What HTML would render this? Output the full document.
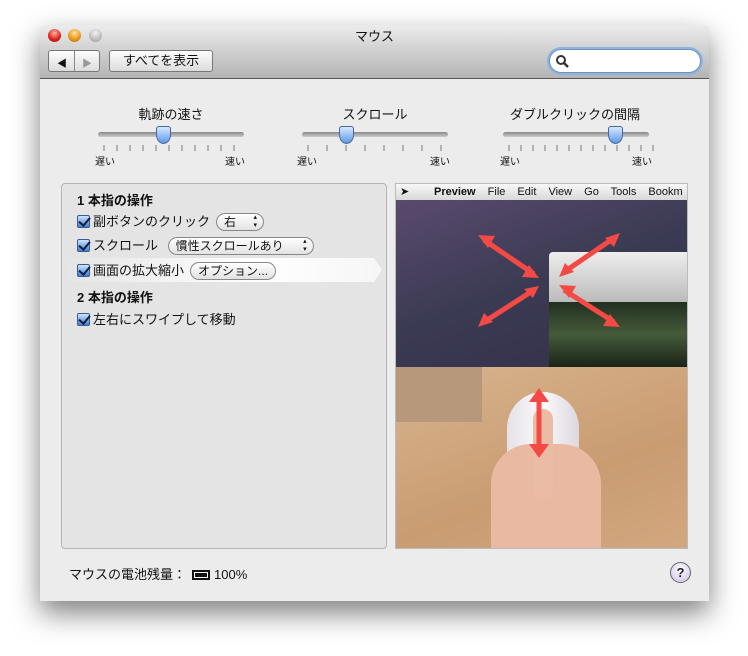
<!DOCTYPE html>
<html><head><meta charset="utf-8"><style>
*{box-sizing:border-box;margin:0;padding:0}
body{width:748px;height:656px;background:#fff;position:relative;overflow:hidden;font-family:"Liberation Sans","Noto Sans CJK JP",sans-serif;font-size:13px;color:#111}
.win{position:absolute;left:40px;top:25px;width:669px;height:576px;background:#ececec;box-shadow:0 12px 28px rgba(0,0,0,.5);border-radius:5px 5px 0 0;overflow:hidden}
.tb{position:absolute;left:0;top:0;width:100%;height:54px;background:linear-gradient(#ececec,#cfcfcf 50%,#b4b4b4);border-bottom:1px solid #555}
.a{position:absolute}
.light{position:absolute;top:4px;width:13px;height:13px;border-radius:50%}
.btn{position:absolute;background:linear-gradient(#fdfdfd,#dcdcdc);border:1px solid #777;border-radius:3px;height:22px;top:25px}
.title{position:absolute;top:1px;left:0;width:100%;text-align:center;font-size:13px}
.lbl{position:absolute;font-size:13px;text-align:center;width:160px}
.track{position:absolute;height:5px;border-radius:3px;background:linear-gradient(#888,#ccc);width:146px}
.knob{position:absolute;width:15px;height:18px;background:linear-gradient(#d8e8ff,#5d9ae8);border:1px solid #46679a;border-radius:3px 3px 8px 8px / 3px 3px 10px 10px}
.small{position:absolute;font-size:10px}
.panel{position:absolute;left:21px;top:158px;width:326px;height:366px;background:#e4e4e4;border:1px solid #b5b5b5;border-radius:4px}
.row{position:absolute;left:15px;font-size:13px;white-space:nowrap}
.cb{display:inline-block;width:13px;height:13px;background:linear-gradient(#d0e4fa,#3d7fd8);border:1px solid #3a5d91;border-radius:2px;vertical-align:-2px;margin-right:3px;position:relative}
.cb:after{content:"";position:absolute;left:3px;top:-1px;width:5px;height:9px;border:solid #102040;border-width:0 2px 2px 0;transform:rotate(40deg)}
.pop{display:inline-block;border:1px solid #888;border-radius:9px;background:linear-gradient(#fff,#e2e2e2);padding:0 7px;height:18px;line-height:16px;font-size:12px;margin-left:6px;position:relative;vertical-align:0}
.img{position:absolute;left:355px;top:158px;width:293px;height:366px;overflow:hidden;border:1px solid #bbb}
.arr{stroke:#f34a45;stroke-width:5;fill:none}
</style></head><body>
<div class="win">
 <div class="tb">
  <div class="light" style="left:8px;background:radial-gradient(circle at 50% 30%,#ffb3a8,#d8201a 60%,#a11)"></div>
  <div class="light" style="left:28px;background:radial-gradient(circle at 50% 30%,#ffe3a0,#e69618 60%,#b66a00)"></div>
  <div class="light" style="left:49px;background:radial-gradient(circle at 50% 30%,#f2f2f2,#bbb 60%,#999)"></div>
  <div class="title">マウス</div>
  <div class="btn" style="left:8px;width:52px"><span class="a" style="left:8px;top:4px;font-size:10px">◀</span><span class="a" style="left:25px;top:0;width:1px;height:20px;background:#888"></span><span class="a" style="left:33px;top:4px;font-size:10px;color:#999">▶</span></div>
  <div class="btn" style="left:69px;width:104px;text-align:center;line-height:20px;font-size:13px">すべてを表示</div>
  <div class="a" style="left:509px;top:24px;width:152px;height:24px;border-radius:12px;background:#fff;border:1px solid #7a8fb0;box-shadow:0 0 0 2px #8ab4e6"><svg class="a" style="left:5px;top:4px" width="14" height="14"><circle cx="6" cy="6" r="4" stroke="#333" stroke-width="2" fill="none"/><path d="M9 9l4 4" stroke="#333" stroke-width="2.5"/></svg></div>
 </div>
 <div class="lbl" style="left:51px;top:79px">軌跡の速さ</div>
 <div class="lbl" style="left:255px;top:79px">スクロール</div>
 <div class="lbl" style="left:455px;top:79px">ダブルクリックの間隔</div>
 <div class="track" style="left:58px;top:107px"></div><div class="knob" style="left:116px;top:101px"></div>
 <div class="track" style="left:262px;top:107px"></div><div class="knob" style="left:299px;top:101px"></div>
 <div class="track" style="left:463px;top:107px"></div><div class="knob" style="left:568px;top:101px"></div>
 <svg class="a" style="left:0;top:118px" width="669" height="10" stroke="#777">
  <path d="M64 2v6M77 2v6M90 2v6M103 2v6M116 2v6M129 2v6M142 2v6M155 2v6M168 2v6M181 2v6M194 2v6"/>
  <path d="M268 2v6M287 2v6M306 2v6M325 2v6M344 2v6M363 2v6M382 2v6M401 2v6"/>
  <path d="M469 2v6M481 2v6M493 2v6M505 2v6M517 2v6M529 2v6M541 2v6M553 2v6M565 2v6M577 2v6M589 2v6M601 2v6M613 2v6"/>
 </svg>
 <div class="small" style="left:55px;top:128px">遅い</div><div class="small" style="left:185px;top:128px">速い</div>
 <div class="small" style="left:257px;top:128px">遅い</div><div class="small" style="left:390px;top:128px">速い</div>
 <div class="small" style="left:460px;top:128px">遅い</div><div class="small" style="left:592px;top:128px">速い</div>
 <div class="panel">
  <svg class="a" style="left:0;top:74px" width="326" height="24"><defs><linearGradient id="g" x1="0" x2="1"><stop offset="0" stop-color="#e4e4e4"/><stop offset=".6" stop-color="#fff"/><stop offset="1" stop-color="#f6f6f6"/></linearGradient></defs><path d="M0 0H312L320 12L312 24H0Z" fill="url(#g)"/></svg>
  <div class="row" style="top:6px;font-weight:bold">1 本指の操作</div>
  <div class="row" style="top:27px"><span class="cb"></span>副ボタンのクリック<span class="pop" style="width:48px">右<span class="a" style="right:6px;top:0;font-size:7px;line-height:8px">▴<br>▾</span></span></div>
  <div class="row" style="top:51px"><span class="cb"></span>スクロール <span class="pop" style="width:146px">慣性スクロールあり<span class="a" style="right:6px;top:0;font-size:7px;line-height:8px">▴<br>▾</span></span></div>
  <div class="row" style="top:76px"><span class="cb"></span>画面の拡大縮小<span class="pop">オプション...</span></div>
  <div class="row" style="top:103px;font-weight:bold">2 本指の操作</div>
  <div class="row" style="top:125px"><span class="cb"></span>左右にスワイプして移動</div>
 </div>
 <div class="img">
  <div class="a" style="left:0;top:0;width:293px;height:16px;background:linear-gradient(#f8f8f8,#d8d8d8);font-size:11px;line-height:16px;white-space:nowrap;padding-left:38px;word-spacing:9px"><span class="a" style="left:4px;top:0">➤ </span><b>Preview</b> File Edit View Go Tools Bookm</div>
  <div class="a" style="left:0;top:16px;width:293px;height:167px;background:linear-gradient(160deg,#5a4a6e,#3a3a52 50%,#333048)"></div>
  <div class="a" style="left:153px;top:68px;width:140px;height:50px;background:linear-gradient(#eee,#bbb);border-radius:4px 0 0 0"></div>
  <div class="a" style="left:153px;top:118px;width:140px;height:65px;background:linear-gradient(#223020,#455a3a,#1a2418)"></div>
  <div class="a" style="left:0;top:183px;width:293px;height:183px;background:linear-gradient(160deg,#d8b48e,#c99c72 60%,#d2a880)"></div>
  <div class="a" style="left:0;top:183px;width:86px;height:55px;background:#b8987a"></div>
  <div class="a" style="left:111px;top:208px;width:72px;height:120px;border-radius:36px 36px 30px 30px;background:linear-gradient(90deg,#e6e2e8,#faf9fb,#dcd8de)"></div>
  <div class="a" style="left:95px;top:260px;width:110px;height:110px;border-radius:40px 40px 0 0;background:#e9b9a2"></div>
  <div class="a" style="left:137px;top:225px;width:20px;height:90px;border-radius:10px;background:#ebbca5"></div>
  <svg class="a" style="left:0;top:0" width="293" height="366">
   <g class="arr"><path d="M88 56L138 90M138 106L88 138M218 54L168 88M168 106L218 138M143 212V266"/></g>
   <g fill="#f34a45"><path d="M82 51l17 1-7 12z"/><path d="M143 94l-17-1 7-12z"/><path d="M143 102l-6 12-9-9z"/><path d="M82 143l6-14 9 9z"/><path d="M224 49l-6 14-9-9z"/><path d="M163 93l6-14 9 9z"/><path d="M163 101l17 1-7 12z"/><path d="M224 143l-17-1 7-12z"/><path d="M143 204l-10 14h20z"/><path d="M143 274l-10-14h20z"/></g>
  </svg>
 </div>
 <div class="a" style="left:29px;top:539px;font-size:13px">マウスの電池残量：<span style="display:inline-block;width:18px;height:10px;border:2px solid #111;vertical-align:-1px;margin:0 4px 0 6px;background:#111;box-shadow:inset 0 0 0 1px #fff"></span>100%</div>
 <div class="a" style="left:630px;top:537px;width:21px;height:21px;border-radius:50%;border:1px solid #666;background:radial-gradient(circle at 50% 35%,#fff,#c8bde8);text-align:center;font-weight:bold;line-height:19px;color:#222">?</div>
</div>
</body></html>
